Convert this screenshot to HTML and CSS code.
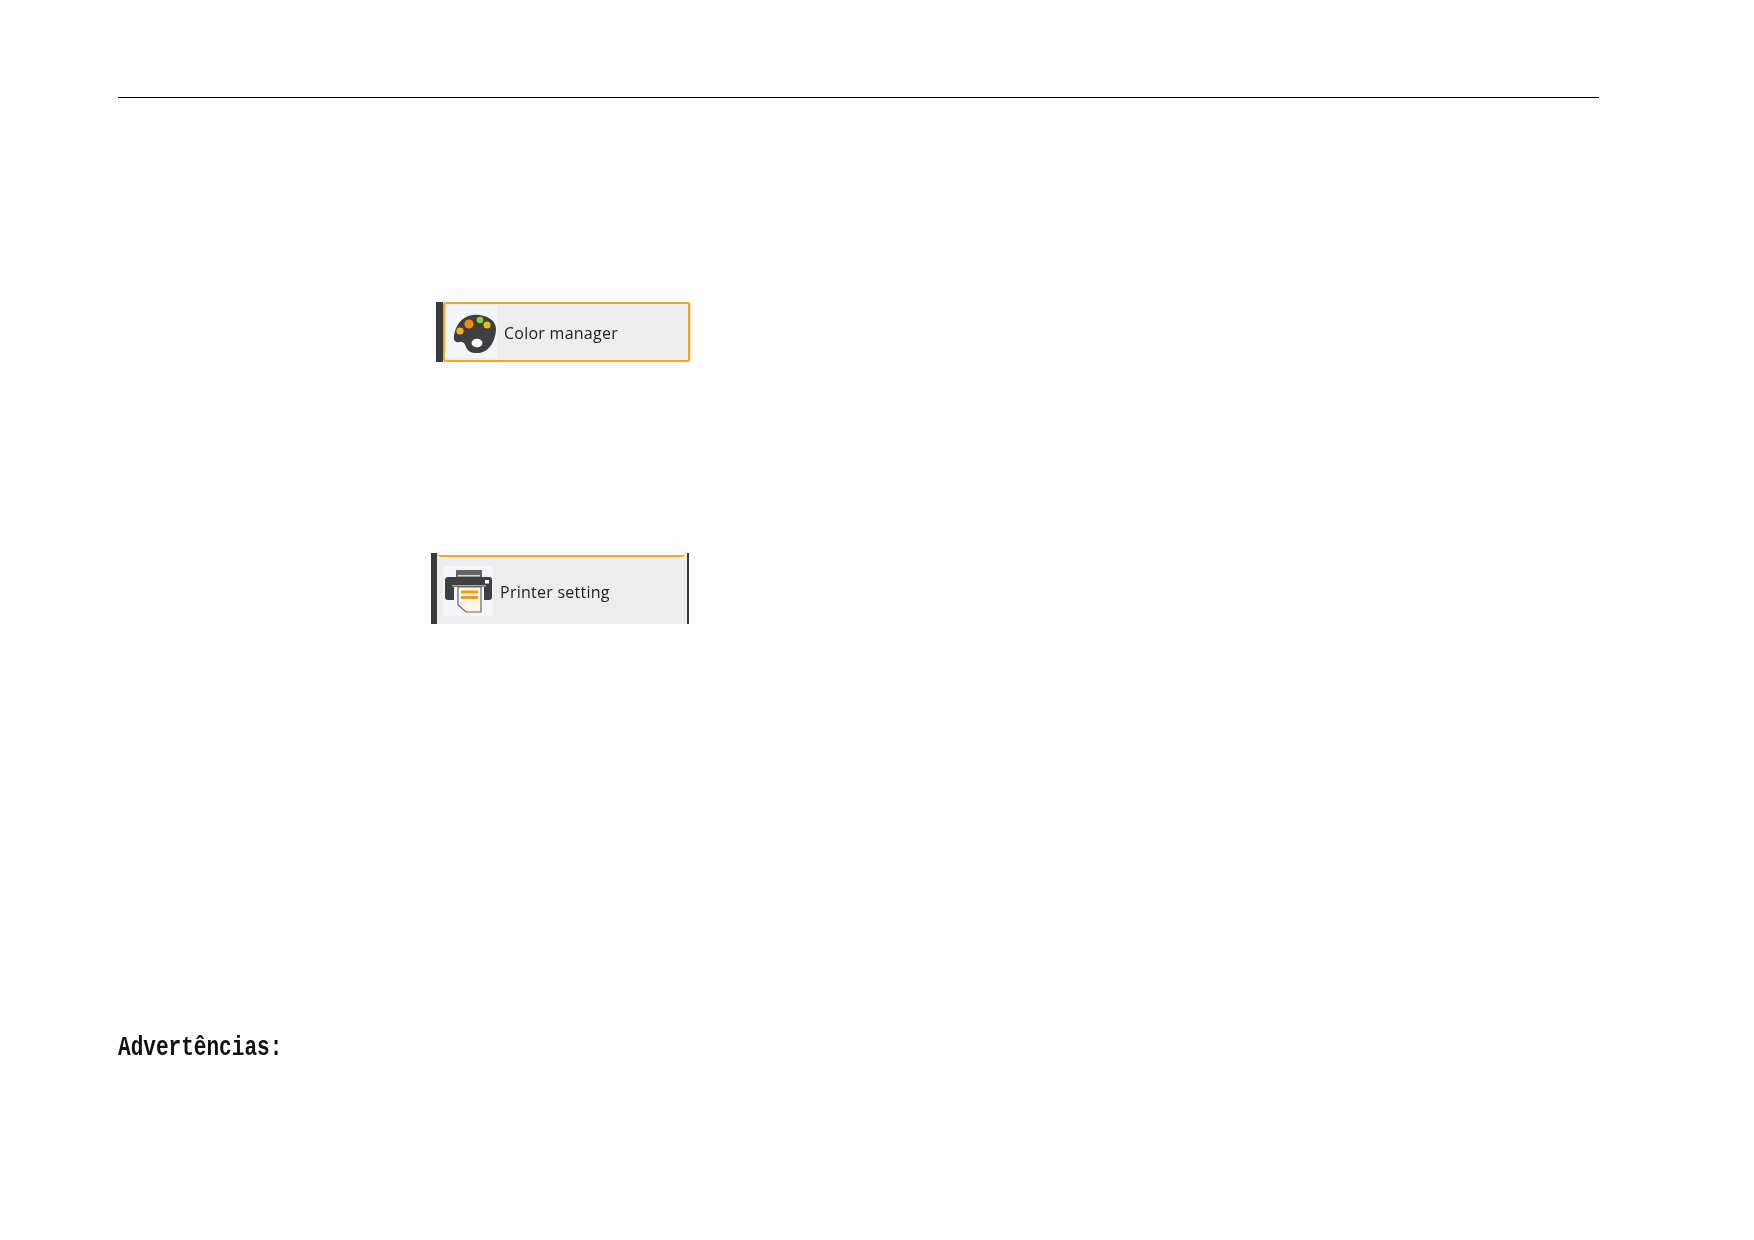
FILE: index.html
```html
<!DOCTYPE html>
<html lang="pt">
<head>
    <meta charset="utf-8">
    <title>Advertências</title>
    <meta content="width=device-width, initial-scale=1.0" name="viewport">
    <link rel="stylesheet" href="styles.css">
</head>
<body>
<div class="page">
    <div class="top-rule"></div>

    <!-- Color manager -->
    <div class="menu-item color-item">
        <div class="item-box">
            <span class="item-icon">
                <svg width="44" height="40" viewBox="0 0 44 40">
                    <path d="M20 1C31 0 43 5 43 15C43 25 37 38 26 39C19 39.500 15 38 13 33C12 30 10 27 7 28C3 29 0 27 1 22C2 13 8 2 20 1Z" fill="#3f3f41"/>
                    <ellipse cx="24" cy="29" rx="5.500" ry="4.300" fill="#fff"/>
                    <circle cx="7" cy="17" r="3.600" fill="#f3b71c"/>
                    <circle cx="16" cy="10" r="4.600" fill="#f28a0c"/>
                    <circle cx="27" cy="6" r="3.300" fill="#8fd136"/>
                    <circle cx="34" cy="11" r="3.600" fill="#f3b71c"/>
                </svg>
            </span>
            <span class="item-label color-label">Color manager</span>
        </div>
    </div>

    <!-- Printer setting -->
    <div class="menu-item printer-item">
        <div class="prev-edge"></div>
        <div class="item-box">
            <span class="item-icon">
                <svg width="48" height="46" viewBox="0 0 48 46">
                    <path d="M12 9V2H38V9Z" fill="#646467"/>
                    <rect x="14" y="7" width="22" height="1.500" fill="#d8d8da"/>
                    <path d="M4 9H45C47 9 48 10 48 12V29C48 31 47 32 45 32H40V19H10V32H4C2 32 1 31 1 29V12C1 10 2 9 4 9Z" fill="#3f3f41"/>
                    <rect x="41" y="12" width="4" height="3.500" fill="#fff"/>
                    <rect x="8" y="17" width="34" height="1.500" fill="#a5a5a8"/>
                    <path d="M14 19H37V44H22L14 37Z" fill="#fdf6e8" stroke="#66666a" stroke-width="1.200"/>
                    <rect x="17" y="22.500" width="17" height="3" fill="#f29a1f"/>
                    <rect x="17" y="28" width="17" height="3" fill="#f29a1f"/>
                </svg>
            </span>
            <span class="item-label printer-label">Printer setting</span>
        </div>
    </div>

    <h2 class="warning-title">Advertências:</h2>
</div>
</body>
</html>
```

FILE: styles.css
```css
body {
    margin: 0;
    padding: 0;
    background: #fff;
    font-family: "Open Sans", "Liberation Sans", sans-serif;
    color: #222;
}

.page {
    padding: 97px 155px 0 118px;
}

.top-rule {
    height: 1px;
    background: #000;
}

.menu-item {
    background: #ededee;
    box-sizing: border-box;
}

.color-item {
    width: 254px;
    height: 60px;
    margin: 204px 0 0 318px;
    border-left: 7px solid #3a3a3a;
    box-shadow: 1px 0 0 #f6e3bd;
}

.color-item .item-box {
    height: 100%;
    box-sizing: border-box;
    border: 2px solid #f5a623;
    border-radius: 3px;
    gap: 7px;
}

.color-item .item-icon {
    justify-content: flex-end;
    align-items: flex-end;
    padding-bottom: 4px;
    height: 48px;
}

.printer-item {
    width: 258px;
    height: 71px;
    margin: 191px 0 0 313px;
    border-left: 6px solid #3a3a3a;
    border-right: 2px solid #3a3a3a;
}

.prev-edge {
    height: 2px;
    margin: 0 2px 0 0;
    background: #fff;
    border-bottom: 2px solid #f5a623;
    border-radius: 0 0 4px 4px;
}

.printer-item .item-box {
    padding: 9px 0 0 6px;
    gap: 7px;
}

.printer-item .item-icon {
    width: 50px;
    height: 50px;
}

.item-box {
    display: flex;
    align-items: center;
    gap: 8px;
}

.item-icon {
    display: flex;
    align-items: center;
    justify-content: center;
    width: 52px;
    height: 52px;
    background: #f4f5f8;
}

.item-icon svg {
    filter: blur(0.4px);
}

.item-label {
    position: relative;
    font-size: 16px;
    letter-spacing: 0.25px;
    color: #1d1d22;
    filter: blur(0.25px);
}

.color-label {
    top: 1px;
}

.printer-label {
    top: 1px;
}

.warning-title {
    display: inline-block;
    margin: 408px 0 0;
    font-family: "Liberation Mono", monospace;
    font-size: 27px;
    font-weight: bold;
    line-height: 32px;
    color: #111;
    transform: scaleX(0.78);
    transform-origin: left center;
}
```
